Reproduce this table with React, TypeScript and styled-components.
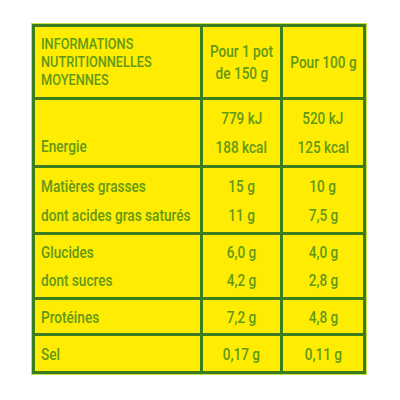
import React from "react";
import styled, { createGlobalStyle } from "styled-components";

const Global = createGlobalStyle`
  html, body { margin: 0; padding: 0; background: #ffffff; }
  body { width: 400px; height: 400px; }
`;

const Page = styled.div`
  padding: 24px 0 0 32px;
`;

const Table = styled.div`
  width: 334px;
  height: 350px;
  box-sizing: border-box;
  display: grid;
  grid-template-columns: 165px 77px 80px;
  grid-template-rows: 70px 65px 64px 62px 33px 35px;
  gap: 3px;
  padding: 3px;
  background: #3b7c1f;
  box-shadow: 0 0 0 1px #c9e04a;
  font-family: Roboto, "Liberation Sans", sans-serif;
  font-weight: 500;
  font-size: 17px;
  color: #639819;
`;

const Cell = styled.div<{ $gap?: number; $label?: boolean; $end?: boolean }>`
  background: #feed02;
  display: flex;
  flex-direction: column;
  justify-content: ${(p) => (p.$end ? "flex-end" : "center")};
  align-items: ${(p) => (p.$label ? "flex-start" : "center")};
  padding: ${(p) => (p.$label ? "0 0 0 6px" : "0")};
  gap: ${(p) => p.$gap ?? 0}px;
  line-height: 18px;
  white-space: nowrap;
`;

const Txt = styled.span<{ $left?: boolean }>`
  display: inline-block;
  transform: scaleX(0.8);
  transform-origin: ${(p) => (p.$left ? "left center" : "center center")};
`;

const Title = styled(Txt)`
  text-transform: uppercase;
  font-size: 15px;
  line-height: 18px;
  transform: scaleX(0.85);
`;

const HeadText = styled(Txt)`
  line-height: 22px;
`;

const EnergyLabel = styled(Txt)`
  padding-bottom: 10px;
`;

type Row = { labels: string[]; a: string[]; b: string[]; gap: number };

const rows: Row[] = [
  { labels: ["Matières grasses", "dont acides gras saturés"], a: ["15 g", "11 g"], b: ["10 g", "7,5 g"], gap: 11 },
  { labels: ["Glucides", "dont sucres"], a: ["6,0 g", "4,2 g"], b: ["4,0 g", "2,8 g"], gap: 10 },
  { labels: ["Protéines"], a: ["7,2 g"], b: ["4,8 g"], gap: 0 },
  { labels: ["Sel"], a: ["0,17 g"], b: ["0,11 g"], gap: 0 },
];

export default function App() {
  return (
    <>
      <Global />
      <Page>
        <Table>
          <Cell $label>
            <Title $left>Informations</Title>
            <Title $left>Nutritionnelles</Title>
            <Title $left>Moyennes</Title>
          </Cell>
          <Cell>
            <HeadText>Pour 1 pot</HeadText>
            <HeadText>de 150 g</HeadText>
          </Cell>
          <Cell>
            <HeadText>Pour 100 g</HeadText>
          </Cell>

          <Cell $label $end>
            <EnergyLabel $left>Energie</EnergyLabel>
          </Cell>
          <Cell $gap={11}>
            <Txt>779 kJ</Txt>
            <Txt>188 kcal</Txt>
          </Cell>
          <Cell $gap={11}>
            <Txt>520 kJ</Txt>
            <Txt>125 kcal</Txt>
          </Cell>

          {rows.map((r, i) => (
            <React.Fragment key={i}>
              <Cell $label $gap={r.gap}>
                {r.labels.map((l) => (
                  <Txt $left key={l}>{l}</Txt>
                ))}
              </Cell>
              <Cell $gap={r.gap}>
                {r.a.map((v) => (
                  <Txt key={v}>{v}</Txt>
                ))}
              </Cell>
              <Cell $gap={r.gap}>
                {r.b.map((v) => (
                  <Txt key={v}>{v}</Txt>
                ))}
              </Cell>
            </React.Fragment>
          ))}
        </Table>
      </Page>
    </>
  );
}
